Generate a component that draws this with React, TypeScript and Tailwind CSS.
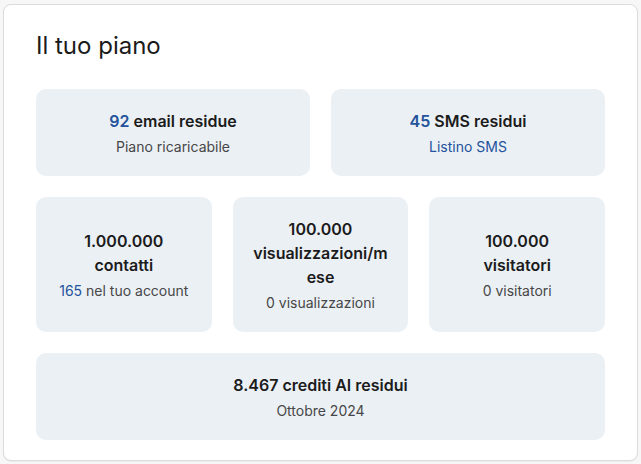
import React from 'react';

type Stat = {
    title: React.ReactNode;
    subtitle: React.ReactNode;
};

function StatBox({ title, subtitle }: Stat) {
    return (
        <div className="flex flex-col items-center justify-center rounded-[10px] bg-[#ebf0f5] px-4 pt-5 pb-[19px] text-center">
            <div className="text-[16px] leading-6 font-semibold break-words text-[#1b1b1b] w-full">{title}</div>
            <div className="mt-1 text-[14px] leading-5 text-[#474747]">{subtitle}</div>
        </div>
    );
}

const blue = 'text-[#23539b]';

export default function App() {
    return (
        <div
            className="min-h-screen bg-[#f7f7f7] px-[3px] pt-1 pb-[3px]"
            style={{ fontFamily: 'Inter, "Noto Sans", sans-serif' }}
        >
            <div className="rounded-lg border border-[#dcdcdc] bg-white px-8 pt-[27px] pb-5 shadow-[0_1px_1px_rgba(0,0,0,0.05)]">
                <h1 className="text-[24px] leading-7 font-normal text-[#1b1b1b]">Il tuo piano</h1>

                <div className="mt-[29px] grid grid-cols-2 gap-[21px]">
                    <StatBox
                        title={<><span className={blue}>92</span> email residue</>}
                        subtitle="Piano ricaricabile"
                    />
                    <StatBox
                        title={<><span className={blue}>45</span> SMS residui</>}
                        subtitle={<a href="#" className={blue}>Listino SMS</a>}
                    />
                </div>

                <div className="mt-[21px] grid grid-cols-3 gap-[21px]">
                    <StatBox
                        title={<>1.000.000<br />contatti</>}
                        subtitle={<><span className={blue}>165</span> nel tuo account</>}
                    />
                    <StatBox
                        title="100.000 visualizzazioni/mese"
                        subtitle="0 visualizzazioni"
                    />
                    <StatBox
                        title={<>100.000<br />visitatori</>}
                        subtitle="0 visitatori"
                    />
                </div>

                <div className="mt-[21px]">
                    <StatBox title="8.467 crediti AI residui" subtitle="Ottobre 2024" />
                </div>
            </div>
        </div>
    );
}
